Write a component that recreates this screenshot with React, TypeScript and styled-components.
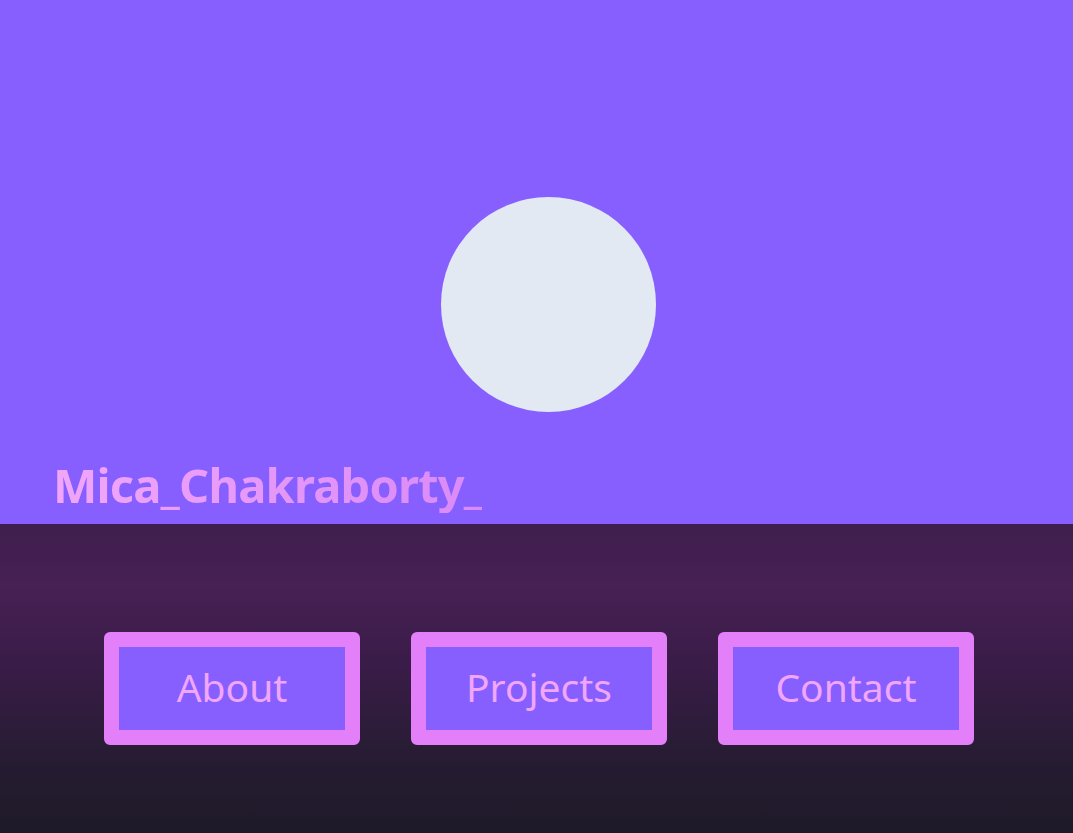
import React from "react";
import styled, { createGlobalStyle } from "styled-components";

const Global = createGlobalStyle`
  html, body { margin: 0; padding: 0; }
  body { font-family: "Noto Sans", "Open Sans", sans-serif; background: #1e1b29; }
`;

const Page = styled.div`
  width: 1073px;
  height: 833px;
  display: flex;
  flex-direction: column;
  overflow: hidden;
`;

const Hero = styled.header`
  height: 524px;
  background: #875fff;
  display: flex;
  flex-direction: column;
  align-items: stretch;
  box-sizing: border-box;
  padding-top: 197px;
`;

const Avatar = styled.div`
  width: 215px;
  height: 215px;
  border-radius: 50%;
  background: #e3e9f2;
  align-self: center;
  margin-left: 24px;
`;

const Name = styled.h1`
  margin: 45px 0 0 53px;
  font-size: 47px;
  font-weight: 700;
  letter-spacing: -0.8px;
  line-height: 56px;
  background: linear-gradient(90deg, #f2a6f9 0%, #d98af7 100%);
  -webkit-background-clip: text;
  background-clip: text;
  color: transparent;
  width: max-content;
`;

const Nav = styled.nav`
  flex: 1;
  background: linear-gradient(180deg, #3f1f4e 0%, #472054 20%, #3a1c48 45%, #271c33 75%, #1e1a28 100%);
  display: flex;
  justify-content: center;
  align-items: flex-start;
  gap: 51px;
  padding-top: 108px;
  padding-left: 5px;
`;

const Button = styled.button`
  width: 256px;
  height: 113px;
  box-sizing: border-box;
  border: 15px solid #e27ff9;
  border-radius: 6px;
  background: #875fff;
  color: #f2a6f9;
  font-family: "Noto Sans", "Open Sans", sans-serif;
  font-size: 39px;
  line-height: 1;
  font-weight: 400;
  cursor: pointer;
  padding: 0 0 4px;
`;

export default function App() {
  return (
    <>
      <Global />
      <Page>
        <Hero>
          <Avatar />
          <Name>Mica_Chakraborty_</Name>
        </Hero>
        <Nav>
          <Button>About</Button>
          <Button>Projects</Button>
          <Button>Contact</Button>
        </Nav>
      </Page>
    </>
  );
}
